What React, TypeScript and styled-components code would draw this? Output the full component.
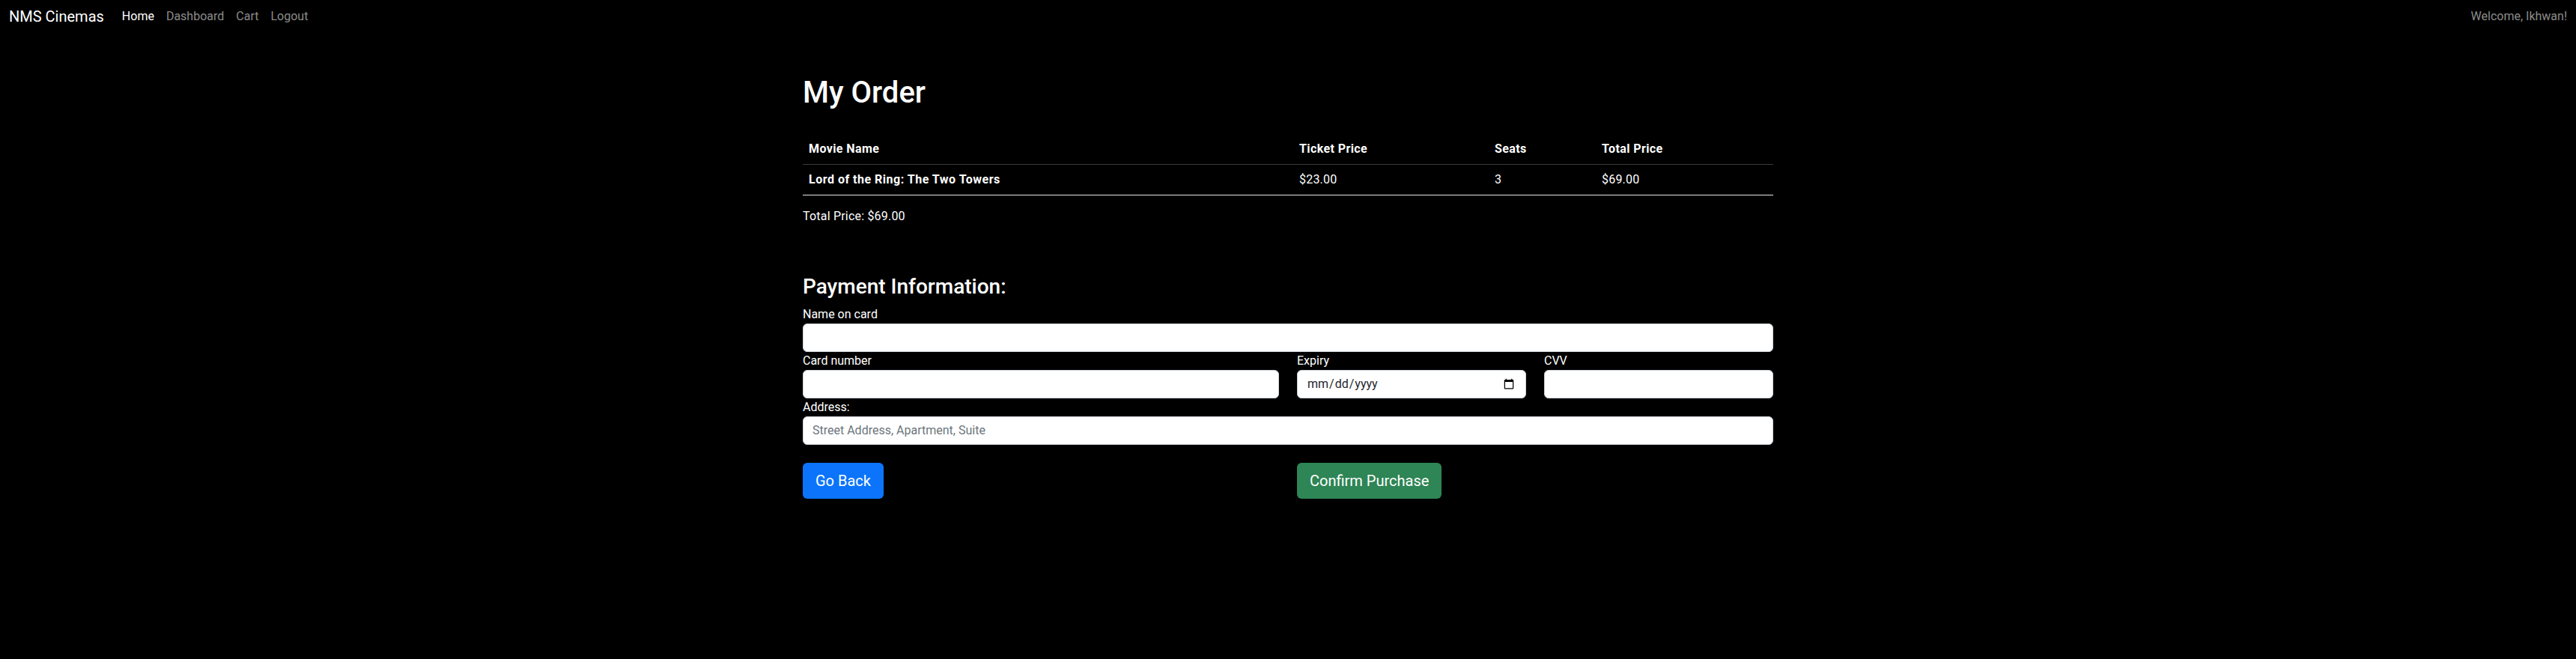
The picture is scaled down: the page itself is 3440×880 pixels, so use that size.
import React, { FC } from 'react';
import styled, { createGlobalStyle } from 'styled-components';

const GlobalStyle = createGlobalStyle`
  body {
    background-color: #000;
    color: #fff;
    font-family: Roboto, "Liberation Sans", sans-serif;
    font-size: 16px;
    line-height: 1.5;
    margin: 0;
  }
`;

const Navbar = styled.nav`
  align-items: center;
  box-sizing: border-box;
  display: flex;
  height: 44px;
  justify-content: space-between;
  padding: 0 12px;
`;
const NavLeft = styled.div`
  align-items: center;
  display: flex;
`;
const Brand = styled.a`
  color: #fff;
  font-size: 20px;
  line-height: 30px;
  margin-right: 16px;
  text-decoration: none;
`;
const NavLinks = styled.div`
  display: flex;
`;
const NavLink = styled.a<{ $active?: boolean }>`
  color: ${(props) => (props.$active ? '#fff' : 'rgba(255, 255, 255, 0.55)')};
  padding: 0 8px;
  text-decoration: none;
`;
const Welcome = styled.span`
  color: rgba(255, 255, 255, 0.55);
`;

const Container = styled.main`
  margin: 0 auto;
  padding-top: 56px;
  width: 1296px;
`;
const Title = styled.h1`
  font-size: 40px;
  font-weight: 500;
  line-height: 1.2;
  margin: 0 0 31px;
`;

const OrderTable = styled.table`
  border-collapse: collapse;
  margin-bottom: 16px;
  width: 100%;
`;
const HeadCell = styled.th<{ $width?: string }>`
  border-bottom: 1px solid #373b3e;
  font-weight: 700;
  letter-spacing: 0.4px;
  padding: 8px;
  text-align: left;
  width: ${(props) => props.$width || 'auto'};
`;
const BodyCell = styled.td<{ $bold?: boolean }>`
  border-bottom: 1px solid #e6e6e6;
  font-weight: ${(props) => (props.$bold ? 700 : 400)};
  letter-spacing: ${(props) => (props.$bold ? '0.5px' : '0.2px')};
  padding: 8px;
`;

const TotalLine = styled.p`
  letter-spacing: 0.2px;
  margin: 0 0 65px;
`;
const SectionTitle = styled.h3`
  font-size: 28px;
  font-weight: 500;
  line-height: 1.2;
  margin: 0 0 8px;
`;

const FieldRow = styled.div`
  display: grid;
  gap: 24px;
  grid-template-columns: calc(50% - 12px) 1fr 1fr;
`;
const Field = styled.div<{ $span?: number }>`
  display: flex;
  flex-direction: column;
  grid-column: span ${(props) => props.$span || 1};
`;
const Label = styled.label`
  line-height: 24px;
`;
const Input = styled.input`
  background: #fff;
  border: 1px solid #ced4da;
  border-radius: 6px;
  box-sizing: border-box;
  color: #212529;
  font-family: inherit;
  font-size: 16px;
  height: 38px;
  line-height: 1.5;
  padding: 6px 12px;
  width: 100%;

  &::placeholder {
    color: #6c757d;
  }
`;

const ButtonRow = styled.div`
  display: grid;
  gap: 24px;
  grid-template-columns: calc(50% - 12px) 1fr;
  margin-top: 24px;
`;
const Button = styled.button<{ $variant: 'primary' | 'success' }>`
  background-color: ${(props) => (props.$variant === 'primary' ? '#0b74fb' : '#2e8555')};
  border: 1px solid transparent;
  border-radius: 6px;
  color: #fff;
  font-family: inherit;
  font-size: 20px;
  justify-self: start;
  line-height: 30px;
  padding: 8px 16px;
`;

const links = [
  { name: 'Home', active: true },
  { name: 'Dashboard' },
  { name: 'Cart' },
  { name: 'Logout' },
];

const App: FC = () => {
  return (
    <>
      <GlobalStyle />
      <Navbar>
        <NavLeft>
          <Brand href="#">NMS Cinemas</Brand>
          <NavLinks>
            {links.map((link, index) => (
              <NavLink href="#" key={index} $active={link.active}>
                {link.name}
              </NavLink>
            ))}
          </NavLinks>
        </NavLeft>
        <Welcome>Welcome, Ikhwan!</Welcome>
      </Navbar>
      <Container>
        <Title>My Order</Title>
        <OrderTable>
          <thead>
            <tr>
              <HeadCell $width="639px">Movie Name</HeadCell>
              <HeadCell $width="245px">Ticket Price</HeadCell>
              <HeadCell $width="127px">Seats</HeadCell>
              <HeadCell>Total Price</HeadCell>
            </tr>
          </thead>
          <tbody>
            <tr>
              <BodyCell $bold>Lord of the Ring: The Two Towers</BodyCell>
              <BodyCell>$23.00</BodyCell>
              <BodyCell>3</BodyCell>
              <BodyCell>$69.00</BodyCell>
            </tr>
          </tbody>
        </OrderTable>
        <TotalLine>Total Price: $69.00</TotalLine>

        <SectionTitle>Payment Information:</SectionTitle>
        <FieldRow>
          <Field $span={3}>
            <Label>Name on card</Label>
            <Input type="text" />
          </Field>
        </FieldRow>
        <FieldRow>
          <Field>
            <Label>Card number</Label>
            <Input type="text" />
          </Field>
          <Field>
            <Label>Expiry</Label>
            <Input type="date" />
          </Field>
          <Field>
            <Label>CVV</Label>
            <Input type="text" />
          </Field>
        </FieldRow>
        <FieldRow>
          <Field $span={3}>
            <Label>Address:</Label>
            <Input type="text" placeholder="Street Address, Apartment, Suite" />
          </Field>
        </FieldRow>
        <ButtonRow>
          <Button $variant="primary">Go Back</Button>
          <Button $variant="success">Confirm Purchase</Button>
        </ButtonRow>
      </Container>
    </>
  );
};

export default App;
